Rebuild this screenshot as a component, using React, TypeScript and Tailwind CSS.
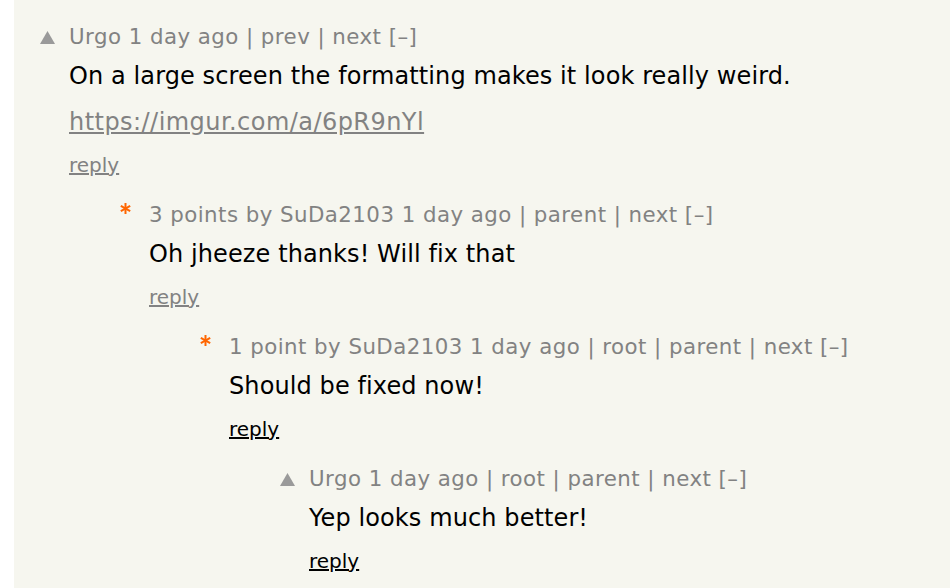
type Comment = {
  level: number;
  mark: "arrow" | "star";
  meta: string[];
  body: string[];
  link?: string;
  replyDark?: boolean;
};

const comments: Comment[] = [
  {
    level: 0,
    mark: "arrow",
    meta: ["Urgo", "1 day ago", "prev", "next"],
    body: ["On a large screen the formatting makes it look really weird."],
    link: "https://imgur.com/a/6pR9nYl",
  },
  {
    level: 1,
    mark: "star",
    meta: ["3 points by SuDa2103", "1 day ago", "parent", "next"],
    body: ["Oh jheeze thanks! Will fix that"],
  },
  {
    level: 2,
    mark: "star",
    meta: ["1 point by SuDa2103", "1 day ago", "root", "parent", "next"],
    body: ["Should be fixed now!"],
    replyDark: true,
  },
  {
    level: 3,
    mark: "arrow",
    meta: ["Urgo", "1 day ago", "root", "parent", "next"],
    body: ["Yep looks much better!"],
    replyDark: true,
  },
];

// strip is 14px, so 26 => x=40 on the page
const indents = ["ml-[26px]", "ml-[106px]", "ml-[186px]", "ml-[266px]"];

function Mark({ kind }: { kind: Comment["mark"] }) {
  if (kind === "star") {
    return (
      <svg width="11" height="11" viewBox="0 0 11 11" className="mt-[1px] ml-[-0.5px]">
        <g stroke="#ff6600" strokeWidth="2" strokeLinecap="butt">
          <line x1="5.5" y1="0" x2="5.5" y2="11" />
          <line x1="0.8" y1="2.8" x2="10.2" y2="8.2" />
          <line x1="0.8" y1="8.2" x2="10.2" y2="2.8" />
        </g>
      </svg>
    );
  }
  return (
    <svg width="15" height="13" viewBox="0 0 15 13" className="mt-[7px]">
      <polygon points="7.5,0 15,13 0,13" fill="#9a9a9a" />
    </svg>
  );
}

function Meta({ parts }: { parts: string[] }) {
  const [who, age, ...links] = parts;
  return (
    <div className="text-[21.33px] leading-[26px] text-[#828282] whitespace-nowrap tracking-[0.45px]">
      {who} {age}
      {links.map((l) => (
        <span key={l}> | {l}</span>
      ))}{" "}
      [–]
    </div>
  );
}

export default function App() {
  return (
    <div
      className="min-h-screen bg-white pl-[14px]"
      style={{ fontFamily: '"DejaVu Sans", Verdana, sans-serif' }}
    >
      <div className="min-h-[588px] bg-[#f6f6ef] pt-[24px]">
        {comments.map((c, i) => (
          <div key={i} className={`flex ${indents[c.level]} mb-[24px]`}>
            <div className="w-[29px] shrink-0">
              <Mark kind={c.mark} />
            </div>
            <div>
              <Meta parts={c.meta} />
              <div className="mt-[11px] text-[24px] leading-[30px] text-black tracking-[0.1px]">
                {c.body.map((b) => (
                  <p key={b}>{b}</p>
                ))}
                {c.link && (
                  <p className="mt-[16px]">
                    <a href="#" className="text-[#828282] underline tracking-[0.45px]">
                      {c.link}
                    </a>
                  </p>
                )}
              </div>
              <div className="mt-[15px] text-[20px] leading-[26px]">
                <a
                  href="#"
                  className={`underline ${c.replyDark ? "text-black" : "text-[#828282]"}`}
                >
                  reply
                </a>
              </div>
            </div>
          </div>
        ))}
      </div>
    </div>
  );
}
